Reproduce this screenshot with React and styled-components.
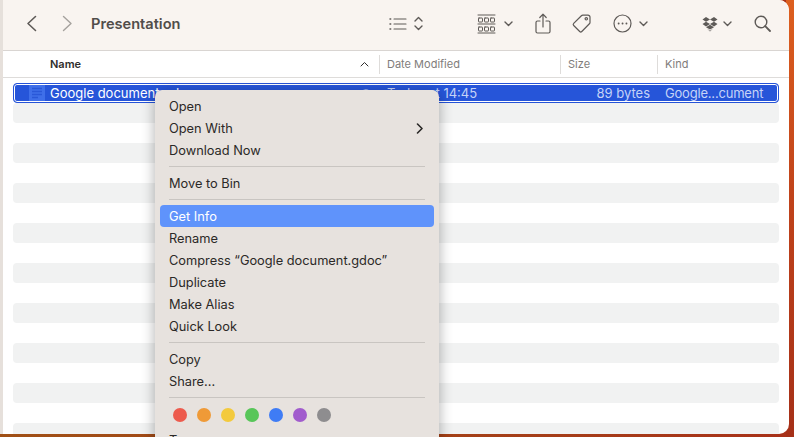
import React from 'react';
import styled, { createGlobalStyle } from 'styled-components';

const GlobalStyle = createGlobalStyle`
  html, body {
    margin: 0;
    padding: 0;
    height: 100%;
    overflow: hidden;
  }
  body {
    font-family: "Inter", "Liberation Sans", sans-serif;
    background: linear-gradient(160deg, #e0621f 0%, #b23a1a 50%, #a0481a 100%);
  }
`

const Desktop = styled.div`
  position: relative;
  width: 794px;
  height: 437px;
  overflow: hidden;
  background: linear-gradient(90deg, #a05016 0%, #a53d18 70%, #a83119 100%);
`

const RightGlow = styled.div`
  position: absolute;
  top: 0;
  right: 0;
  width: 8px;
  height: 437px;
  background: linear-gradient(180deg, #dd5f1f 0%, #c0431b 45%, #a53018 100%);
`

const Window = styled.div`
  position: relative;
  box-sizing: border-box;
  width: 789px;
  height: 434px;
  background: #fff;
  border-left: 3px solid #e6e0db;
  border-radius: 0 10px 10px 0;
  overflow: hidden;
`

const Toolbar = styled.div`
  display: flex;
  align-items: center;
  box-sizing: border-box;
  height: 51px;
  padding-bottom: 3px;
  background: #f9f4f0;
  border-bottom: 1px solid #d9d5d2;
  color: #5e5a57;
`

const Tool = styled.div`
  display: flex;
  align-items: center;
  flex: none;
  margin-left: ${p => p.$ml}px;
  color: ${p => p.$dim ? '#a5a19d' : 'inherit'};
`

const Title = styled.div`
  flex: none;
  width: 140px;
  margin-left: 18px;
  font-size: 14.6px;
  font-weight: 600;
  color: #514d4a;
`

const HeaderRow = styled.div`
  display: grid;
  grid-template-columns: 376px 181px 97px 1fr;
  align-items: center;
  height: 26px;
  border-bottom: 1px solid #dedcda;
  font-size: 11px;
  color: #7f7d7b;
`

const HeaderCell = styled.div`
  display: flex;
  align-items: center;
  justify-content: space-between;
  box-sizing: border-box;
  height: 19px;
  padding: 0 10px 1px ${p => p.$first ? '47px' : '7px'};
  border-left: ${p => p.$first ? 'none' : '1px solid #dedcda'};
  color: ${p => p.$first ? '#2f2d2c' : 'inherit'};
  font-weight: ${p => p.$first ? 600 : 400};
`

const List = styled.div`
  display: flex;
  flex-direction: column;
  padding: 5px 10px 0;
`

const SelectedRow = styled.div`
  display: grid;
  grid-template-columns: 15px 20px 331px 181px 89px 1fr;
  align-items: center;
  box-sizing: border-box;
  height: 20px;
  border: 1px solid #2553d8;
  border-radius: 4px;
  background: #2655d9;
  box-shadow: inset 0 0 0 1px #fff;
  font-size: 13px;
  color: #eef2fd;
  white-space: nowrap;
`

const NameCell = styled.div`
  display: flex;
  align-items: center;
  justify-content: space-between;
  padding: 0 8px 0 1px;
  color: #fff;
`

const CloudMark = styled.div`
  display: flex;
  color: #8fa9ec;
`

const DateCell = styled.div`
  padding-left: 7px;
  color: #c5d3f7;
`

const SizeCell = styled.div`
  text-align: right;
  color: #c5d3f7;
`

const KindCell = styled.div`
  padding-left: 15px;
  color: #c5d3f7;
  letter-spacing: -0.2px;
`

const Stripe = styled.div`
  height: 20px;
  flex: none;
  border-radius: 4px;
  background: ${p => p.$odd ? '#f1f2f2' : 'transparent'};
`

const Menu = styled.div`
  position: absolute;
  left: 155px;
  top: 90px;
  width: 284px;
  padding: 5px;
  box-sizing: border-box;
  background: #e7e2de;
  border-radius: 7px;
  box-shadow: 0 3px 14px rgba(0, 0, 0, 0.32);
  font-size: 12.8px;
  color: #2b2927;
`

const MenuItem = styled.div`
  display: flex;
  align-items: center;
  justify-content: space-between;
  height: 22px;
  padding: 0 10px 0 9px;
  border-radius: 4px;
  white-space: nowrap;
  background: ${p => p.$active ? '#5f93fb' : 'transparent'};
  color: ${p => p.$active ? '#fff' : 'inherit'};
`

const Separator = styled.div`
  height: 1px;
  margin: 5px 9px;
  background: #c9c5c1;
`

const Dots = styled.div`
  display: flex;
  align-items: center;
  gap: 10px;
  height: 24px;
  margin-bottom: 2px;
  padding-left: 13px;
`

const Dot = styled.div`
  width: 14px;
  height: 14px;
  border-radius: 50%;
  background: ${p => p.$color};
`

const Svg = ({ w, h, children, ...rest }) => (
  <svg width={w} height={h} viewBox={`0 0 ${w} ${h}`} fill="none" stroke="currentColor"
    strokeWidth="1.4" strokeLinecap="round" strokeLinejoin="round" {...rest}>
    {children}
  </svg>
)

const Caret = () => (
  <Svg w={9} h={6}><path d="M1 1l3.5 3.5L8 1" /></Svg>
)

const ListIcon = () => (
  <Svg w={18} h={14}>
    <path d="M5 2h12M5 7h12M5 12h12" strokeWidth="1.1" />
    <path d="M1 2h.7M1 7h.7M1 12h.7" strokeWidth="1.5" />
  </Svg>
)

const Sorter = () => (
  <Svg w={9} h={15}><path d="M1 5l3.5-3.5L8 5M1 10l3.5 3.5L8 10" /></Svg>
)

const GalleryIcon = () => (
  <Svg w={19} h={20} strokeWidth="1">
    <path d="M1 1h17M1 10h17M1 19h17" />
    <rect x="1.5" y="4" width="4" height="4" rx=".5" />
    <rect x="7.5" y="4" width="4" height="4" rx=".5" />
    <rect x="13.5" y="4" width="4" height="4" rx=".5" />
    <rect x="1.5" y="13" width="4" height="4" rx=".5" />
    <rect x="7.5" y="13" width="4" height="4" rx=".5" />
    <rect x="13.5" y="13" width="4" height="4" rx=".5" />
  </Svg>
)

const ShareIcon = () => (
  <Svg w={16} h={21} strokeWidth="1.2">
    <path d="M5 8H2.5A1.5 1.5 0 0 0 1 9.500V18.500A1.500 1.500 0 0 0 2.500 20h11a1.500 1.500 0 0 0 1.500-1.500V9.500A1.500 1.500 0 0 0 13.500 8H11" />
    <path d="M8 14V1.500M4.800 4.500L8 1.200l3.200 3.300" />
  </Svg>
)

const TagIcon = () => (
  <Svg w={21} h={21} strokeWidth="1.2">
    <path d="M11.800 2.200h5.200a2 2 0 0 1 2 2v5.200a2 2 0 0 1-.6 1.400l-7.600 7.700a1.500 1.500 0 0 1-2.100 0l-6-6a1.500 1.500 0 0 1 0-2.100l7.700-7.600a2 2 0 0 1 1.400-.6z" />
    <circle cx="15.300" cy="5.800" r="1.200" />
  </Svg>
)

const MoreIcon = () => (
  <Svg w={19} h={19} strokeWidth="1.2">
    <circle cx="9.500" cy="9.500" r="8.500" />
    <path d="M5.600 9.500h.1M9.500 9.500h.1M13.400 9.500h.1" strokeWidth="1.800" />
  </Svg>
)

const DropboxIcon = () => (
  <svg width="16" height="16" viewBox="0 0 16 16" fill="currentColor">
    <path d="M4 1L0.500 3.400 4 5.700 8 3.400zM12 1L8 3.400 12 5.700 15.500 3.400zM0.500 8L4 10.400 8 8 4 5.700zM8 8L12 10.400 15.500 8 12 5.700zM4 11.200L8 13.600 12 11.200 8 8.800z" />
    <path d="M5 12.500L8 14.800 11 12.500 8 15.500z" />
  </svg>
)

const SearchIcon = () => (
  <Svg w={17} h={17} strokeWidth="1.4">
    <circle cx="7" cy="7" r="5.800" />
    <path d="M11.200 11.200L16 16" strokeWidth="1.800" />
  </Svg>
)

const DocIcon = () => (
  <svg width="16" height="16" viewBox="0 0 16 16">
    <rect width="16" height="16" fill="#3f6fe9" />
    <path d="M3 3.500h10M3 6.500h10M3 9.500h10M3 12.500h6" stroke="#2a58d8" strokeWidth="1.500" />
  </svg>
)

const CloudIcon = () => (
  <Svg w={12} h={10} strokeWidth="1.100">
    <path d="M3 8.500a2.300 2.300 0 0 1-.3-4.500A3.400 3.400 0 0 1 9 3.500a2.500 2.500 0 0 1 0 5z" />
  </Svg>
)

const colors = ['#ed5b4d', '#ef9a37', '#f3ca3d', '#58c659', '#3f7cf5', '#a15ccd', '#8e8d8f'];

export default function App() {
  const stripes = [];
  for (let i = 0; i < 17; i++) {
    stripes.push(<Stripe key={i} $odd={i % 2 === 0} />);
  }
  return (
    <Desktop>
      <GlobalStyle />
      <RightGlow />
      <Window>
        <Toolbar>
          <Tool $ml={23}>
            <Svg w={11} h={17} strokeWidth="1.600"><path d="M9.500 1.500L2 8.500l7.500 7" /></Svg>
          </Tool>
          <Tool $ml={25} $dim>
            <Svg w={11} h={17} strokeWidth="1.400"><path d="M1.500 1.500L9 8.500l-7.500 7" /></Svg>
          </Tool>
          <Title>Presentation</Title>
          <Tool $ml={158}><ListIcon /></Tool>
          <Tool $ml={7}><Sorter /></Tool>
          <Tool $ml={54}><GalleryIcon /></Tool>
          <Tool $ml={8}><Caret /></Tool>
          <Tool $ml={22}><ShareIcon /></Tool>
          <Tool $ml={20}><TagIcon /></Tool>
          <Tool $ml={21}><MoreIcon /></Tool>
          <Tool $ml={7}><Caret /></Tool>
          <Tool $ml={54}><DropboxIcon /></Tool>
          <Tool $ml={5}><Caret /></Tool>
          <Tool $ml={22}><SearchIcon /></Tool>
        </Toolbar>
        <HeaderRow>
          <HeaderCell $first>
            Name
            <Svg w={9} h={6} strokeWidth="1"><path d="M1 5l3.500-3.500L8 5" /></Svg>
          </HeaderCell>
          <HeaderCell>Date Modified</HeaderCell>
          <HeaderCell>Size</HeaderCell>
          <HeaderCell>Kind</HeaderCell>
        </HeaderRow>
        <List>
          <SelectedRow>
            <span />
            <DocIcon />
            <NameCell>
              Google document.gdoc
              <CloudMark><CloudIcon /></CloudMark>
            </NameCell>
            <DateCell>Today at 14:45</DateCell>
            <SizeCell>89 bytes</SizeCell>
            <KindCell>Google...cument</KindCell>
          </SelectedRow>
          {stripes}
        </List>
      </Window>
      <Menu>
        <MenuItem>Open</MenuItem>
        <MenuItem>
          Open With
          <Svg w={8} h={11} strokeWidth="1.600"><path d="M1.500 1l4.500 4.500L1.500 10" /></Svg>
        </MenuItem>
        <MenuItem>Download Now</MenuItem>
        <Separator />
        <MenuItem>Move to Bin</MenuItem>
        <Separator />
        <MenuItem $active>Get Info</MenuItem>
        <MenuItem>Rename</MenuItem>
        <MenuItem>Compress “Google document.gdoc”</MenuItem>
        <MenuItem>Duplicate</MenuItem>
        <MenuItem>Make Alias</MenuItem>
        <MenuItem>Quick Look</MenuItem>
        <Separator />
        <MenuItem>Copy</MenuItem>
        <MenuItem>Share...</MenuItem>
        <Separator />
        <Dots>
          {colors.map(c => <Dot key={c} $color={c} />)}
        </Dots>
        <MenuItem>Tags...</MenuItem>
      </Menu>
    </Desktop>
  );
}
